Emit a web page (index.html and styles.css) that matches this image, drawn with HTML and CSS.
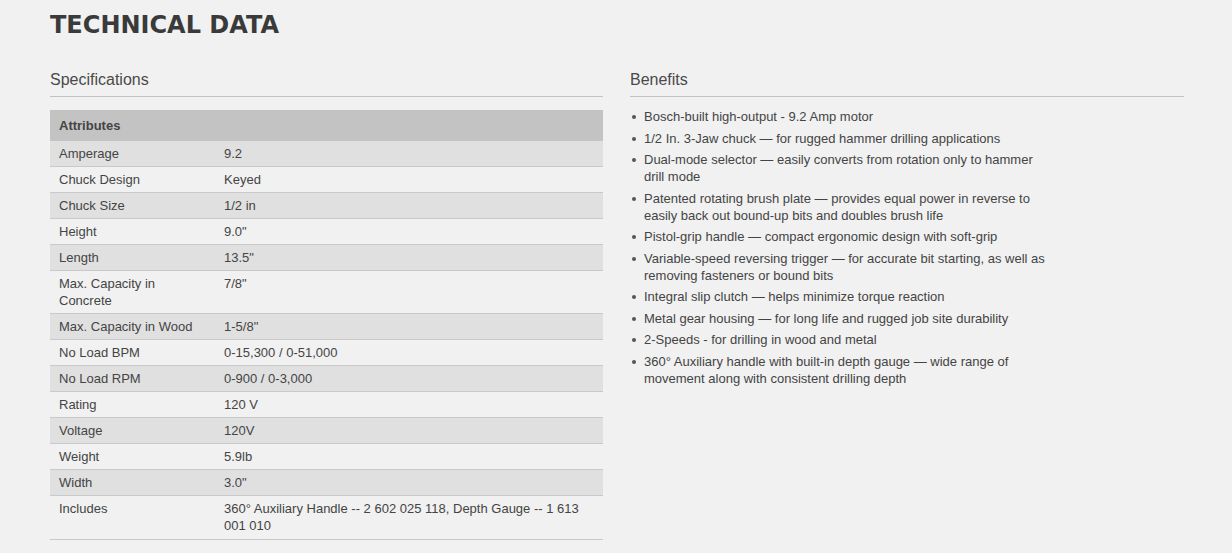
FILE: index.html
```html
<!DOCTYPE html>
<html>
<head>
<meta charset="utf-8">
<link rel="stylesheet" href="styles.css">
</head>
<body>
<div class="page">
  <h1 class="title">TECHNICAL DATA</h1>
  <div class="columns">
    <section class="col">
      <h2 class="col-head">Specifications</h2>
      <table class="spec">
        <thead>
          <tr><th colspan="2">Attributes</th></tr>
        </thead>
        <tbody>
          <tr><td class="k">Amperage</td><td>9.2</td></tr>
          <tr><td class="k">Chuck Design</td><td>Keyed</td></tr>
          <tr><td class="k">Chuck Size</td><td>1/2 in</td></tr>
          <tr><td class="k">Height</td><td>9.0"</td></tr>
          <tr><td class="k">Length</td><td>13.5"</td></tr>
          <tr><td class="k">Max. Capacity in Concrete</td><td>7/8"</td></tr>
          <tr><td class="k">Max. Capacity in Wood</td><td>1-5/8"</td></tr>
          <tr><td class="k">No Load BPM</td><td>0-15,300 / 0-51,000</td></tr>
          <tr><td class="k">No Load RPM</td><td>0-900 / 0-3,000</td></tr>
          <tr><td class="k">Rating</td><td>120 V</td></tr>
          <tr><td class="k">Voltage</td><td>120V</td></tr>
          <tr><td class="k">Weight</td><td>5.9lb</td></tr>
          <tr><td class="k">Width</td><td>3.0"</td></tr>
          <tr><td class="k">Includes</td><td>360° Auxiliary Handle -- 2 602 025 118, Depth Gauge -- 1 613 001 010</td></tr>
        </tbody>
      </table>
    </section>
    <section class="col">
      <h2 class="col-head">Benefits</h2>
      <ul class="benefits">
        <li>Bosch-built high-output - 9.2 Amp motor</li>
        <li>1/2 In. 3-Jaw chuck — for rugged hammer drilling applications</li>
        <li>Dual-mode selector — easily converts from rotation only to hammer drill mode</li>
        <li>Patented rotating brush plate — provides equal power in reverse to easily back out bound-up bits and doubles brush life</li>
        <li>Pistol-grip handle — compact ergonomic design with soft-grip</li>
        <li>Variable-speed reversing trigger — for accurate bit starting, as well as removing fasteners or bound bits</li>
        <li>Integral slip clutch — helps minimize torque reaction</li>
        <li>Metal gear housing — for long life and rugged job site durability</li>
        <li>2-Speeds - for drilling in wood and metal</li>
        <li>360° Auxiliary handle with built-in depth gauge — wide range of movement along with consistent drilling depth</li>
      </ul>
    </section>
  </div>
</div>
</body>
</html>
```

FILE: styles.css
```css
html, body {
  margin: 0;
  padding: 0;
  background: #f1f1f1;
}
body {
  font-family: "Liberation Sans", Arial, sans-serif;
  color: #444;
}
.page {
  padding: 0 48px 0 50px;
  width: 1134px;
}
.title {
  font-family: "DejaVu Sans", Verdana, sans-serif;
  font-weight: bold;
  font-size: 24px;
  line-height: 28px;
  color: #3a3a3a;
  margin: 11px 0 0 0;
}
.columns {
  display: grid;
  grid-template-columns: 553px 554px;
  column-gap: 27px;
  margin-top: 31px;
}
.col-head {
  font-weight: normal;
  font-size: 16px;
  line-height: 20px;
  color: #4a4a4a;
  margin: 0;
  padding-bottom: 6px;
  border-bottom: 1px solid #c2c2c2;
}
.spec {
  width: 100%;
  border-collapse: collapse;
  margin-top: 13px;
  font-size: 13px;
  line-height: 17px;
}
.spec th {
  background: #c3c3c3;
  text-align: left;
  font-weight: bold;
  padding: 7px 9px 7px;
  color: #444;
}
.spec td {
  padding: 4px 9px;
  vertical-align: top;
  border-bottom: 1px solid #c9c9c9;
}
.spec tbody tr:last-child td {
  padding-bottom: 5px;
}
.spec td.k {
  width: 147px;
}
.spec tbody tr:nth-child(odd) td {
  background: #e0e0e0;
}
.benefits {
  margin: 11px 0 0 0;
  padding: 0 0 0 14px;
  width: 401px;
  font-size: 13px;
  line-height: 17px;
  list-style: none;
}
.benefits li {
  position: relative;
  margin-bottom: 4.5px;
}
.benefits li::before {
  content: "";
  position: absolute;
  left: -12px;
  top: 7px;
  width: 4px;
  height: 4px;
  border-radius: 50%;
  background: #555;
}
```
